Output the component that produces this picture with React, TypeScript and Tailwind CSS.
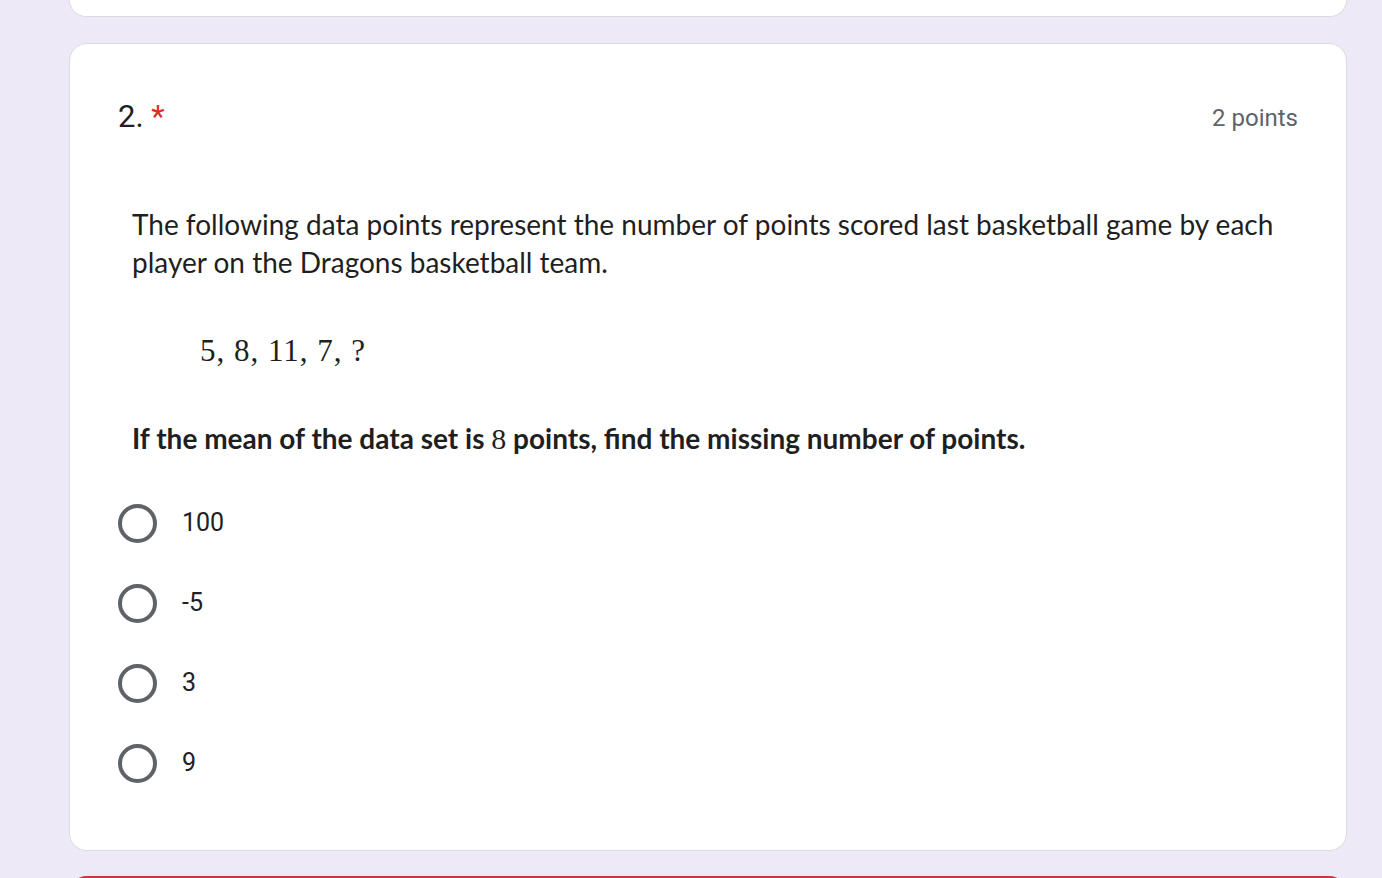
import React from "react";

const options = ["100", "-5", "3", "9"];

function Radio({ label }: { label: string }) {
  return (
    <label className="flex h-[80px] items-center gap-[25px]">
      <span className="block h-[39px] w-[39px] rounded-full border-[4px] border-[#5f6368]" />
      <span className="font-['Roboto',sans-serif] text-[25px] text-[#202124]">{label}</span>
    </label>
  );
}

export default function App() {
  return (
    <div className="flex h-[878px] flex-col gap-[24px] overflow-hidden bg-[#ede9f7] pl-[69px] pr-[35px] font-['Roboto',sans-serif]">
      <div className="h-[17px] shrink-0 rounded-b-[18px] border-x border-b border-[#dadce0] bg-white" />

      <div className="mt-[2px] flex h-[808px] shrink-0 flex-col rounded-[18px] border border-[#dadce0] bg-white px-[48px] pt-[51px]">
        <div className="flex items-start justify-between">
          <div className="text-[31px] leading-[44px] text-[#202124]">
            2. <span className="text-[#d93025]">*</span>
          </div>
          <div className="pt-[1px] text-[24px] leading-[44px] text-[#5f6368]">2 points</div>
        </div>

        <div className="mt-[65px] pl-[14px] font-['Lato',sans-serif] text-[#1f1f1f]">
          <p className="text-[28px] leading-[38px]">
            The following data points represent the number of points scored last basketball game by each player on the Dragons basketball team.
          </p>
          <p className="mt-[50px] pl-[68px] font-['Liberation_Serif',serif] text-[31px] leading-[40px] tracking-[1px]">
            5, 8, 11, 7, ?
          </p>
          <p className="mt-[47px] text-[28px] font-bold leading-[40px]">
            If the mean of the data set is{" "}
            <span className="font-['Liberation_Serif',serif] text-[30px] font-normal">8</span> points, find the missing number of points.
          </p>
        </div>

        <div className="mt-[24px] flex flex-col">
          {options.map((o) => (
            <Radio key={o} label={o} />
          ))}
        </div>
      </div>

      <div className="mt-[1px] h-[100px] shrink-0 rounded-t-[18px] border-x border-t-[3px] border-[#c6373b] bg-white" />
    </div>
  );
}
